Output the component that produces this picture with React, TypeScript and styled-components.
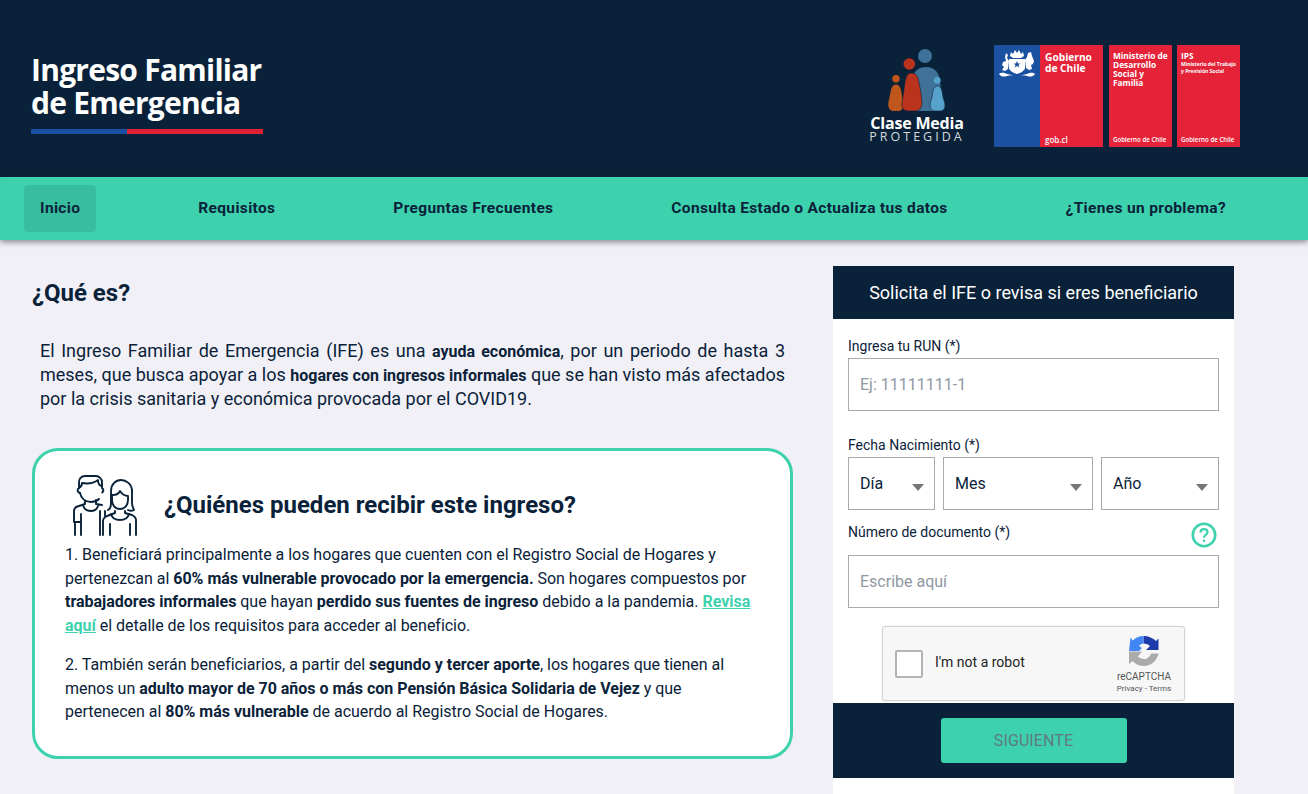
import React from 'react';
import styled, { createGlobalStyle } from 'styled-components';

const GlobalStyle = createGlobalStyle`
  html, body {
    margin: 0;
    height: 794px;
    overflow: hidden;
    background: #f2f0f7;
    font-family: Roboto, "Liberation Sans", sans-serif;
    color: #0a2239;
  }
  * { box-sizing: border-box; }
`;

const Header = styled.header`
  height: 177px;
  background: #0a2239;
  display: flex;
  align-items: flex-start;
  justify-content: space-between;
  padding: 45px 68px 0 31px;
`;

const Brand = styled.div`
  width: 232px;
  margin-top: 8px;
  color: #fff;
  font-family: "Open Sans", sans-serif;
  font-weight: 700;
  font-size: 30px;
  line-height: 33px;
  letter-spacing: -0.75px;
  white-space: nowrap;
`;

const BrandBar = styled.div`
  height: 5px;
  margin-top: 10px;
  background: linear-gradient(to right, #1a51a0 41.4%, #df2035 41.4%);
`;

const Logos = styled.div`
  display: flex;
  align-items: flex-start;
`;

const Clase = styled.div`
  width: 94px;
  margin-right: 30px;
  margin-top: 3px;
  color: #fff;
  display: flex;
  flex-direction: column;
  align-items: center;
  font-family: "Open Sans", sans-serif;
`;

const ClaseName = styled.div`
  margin-top: 1px;
  font-size: 16px;
  font-weight: 700;
  line-height: 16px;
  white-space: nowrap;
  letter-spacing: -0.2px;
`;

const ClaseSub = styled.div`
  font-size: 12.5px;
  line-height: 12px;
  letter-spacing: 3px;
  white-space: nowrap;
  color: #d5d9de;
`;

const Tile = styled.div<{ $w: number; $gap: number }>`
  width: ${(p) => p.$w}px;
  height: 102px;
  margin-right: ${(p) => p.$gap}px;
  background: #e42339;
  color: #fff;
  display: flex;
  font-family: "Open Sans", sans-serif;
`;

const TileBlue = styled.div`
  width: 46px;
  margin-right: 1px;
  background: #1a51a0;
  padding: 5px 5px 0;
`;

const TileBody = styled.div<{ $top: number }>`
  flex: 1;
  padding: ${(p) => p.$top}px 4px 3px;
  display: flex;
  flex-direction: column;
  justify-content: space-between;
`;

const TileTitle = styled.div<{ $size: number; $line: number }>`
  font-size: ${(p) => p.$size}px;
  line-height: ${(p) => p.$line}px;
  font-weight: 700;
  white-space: nowrap;
`;

const TileSmall = styled.div`
  font-size: 5px;
  line-height: 7px;
  font-weight: 700;
  margin-top: 1px;
  white-space: nowrap;
`;

const TileFoot = styled.div<{ $size: number }>`
  font-size: ${(p) => p.$size}px;
  line-height: 9px;
  font-weight: 600;
  white-space: nowrap;
`;

const Nav = styled.nav`
  height: 63px;
  background: #3ed1ae;
  display: flex;
  align-items: flex-start;
  justify-content: space-between;
  padding: 8px 66px 0 24px;
  box-shadow: 0 2px 6px rgba(40, 40, 60, 0.55);
  position: relative;
`;

const NavItem = styled.a<{ $active?: boolean }>`
  height: 47px;
  padding: 0 16px 2px;
  display: flex;
  align-items: center;
  border-radius: 4px;
  font-size: 15.5px;
  font-weight: 700;
  letter-spacing: 0.35px;
  white-space: nowrap;
  color: #0a2239;
  background: ${(p) => (p.$active ? '#38bd9f' : 'transparent')};
`;

const Main = styled.main`
  display: grid;
  grid-template-columns: 761px 401px;
  column-gap: 40px;
  padding: 26px 0 0 32px;
`;

const Title = styled.h1`
  margin: 0;
  font-size: 24px;
  line-height: 54px;
  font-weight: 700;
`;

const Intro = styled.p`
  margin: 19px 8px 0;
  font-size: 18px;
  line-height: 24px;
  text-align: justify;
  b { font-size: 16px; line-height: 1; font-weight: 700; }
`;

const Card = styled.section`
  margin-top: 37px;
  height: 311px;
  background: #fff;
  border: 3px solid #3ed1ae;
  border-radius: 26px;
  padding: 23px 30px 0;
`;

const CardHead = styled.div`
  display: flex;
  align-items: center;
  gap: 26px;
  padding-left: 7px;
  height: 62px;
  margin-bottom: 7px;
`;

const CardTitle = styled.h2`
  margin: 0;
  font-size: 24px;
  font-weight: 700;
`;

const CardText = styled.p`
  margin: 0 0 16px;
  font-size: 16px;
  line-height: 23.5px;
  letter-spacing: -0.02px;
  b { font-weight: 700; }
  a { color: #3ed1ae; font-weight: 700; text-decoration: underline; }
`;

const Panel = styled.aside`
  background: #fff;
  height: 528px;
`;

const PanelHead = styled.div`
  height: 53px;
  background: #0a2239;
  color: #fff;
  font-size: 18px;
  display: flex;
  align-items: center;
  justify-content: center;
`;

const Form = styled.form`
  height: 384px;
  padding: 0 15px;
`;

const Label = styled.label`
  display: block;
  font-size: 14px;
  line-height: 20px;
`;

const LabelRow = styled.div<{ $top: number; $height: number }>`
  display: flex;
  justify-content: space-between;
  align-items: flex-start;
  height: ${(p) => p.$height}px;
  padding-top: ${(p) => p.$top}px;
`;

const TextInput = styled.input`
  display: block;
  width: 100%;
  height: 53px;
  border: 1px solid #a9a9a9;
  background: #fff;
  padding: 0 11px;
  font: 16px Roboto, sans-serif;
  outline: none;
  &::placeholder { color: #8f98a3; }
`;

const DateRow = styled.div`
  display: grid;
  grid-template-columns: 87px 150px 118px;
  column-gap: 8px;
`;

const Select = styled.div`
  height: 53px;
  border: 1px solid #a9a9a9;
  padding: 0 11px;
  font-size: 16px;
  display: flex;
  align-items: center;
  justify-content: space-between;
`;

const Caret = styled.span`
  width: 0;
  height: 0;
  margin: 7px -1px 0 0;
  border-left: 6.5px solid transparent;
  border-right: 6.5px solid transparent;
  border-top: 7px solid #777;
`;

const HelpWrap = styled.span`
  display: flex;
  margin: 0 2px 0 0;
`;

const Captcha = styled.div`
  width: 303px;
  height: 75px;
  margin: 18px auto 0;
  background: #f7f7f7;
  border: 1px solid #d3d3d3;
  border-radius: 3px;
  box-shadow: 0 0 2px rgba(0, 0, 0, 0.1);
  display: flex;
  align-items: center;
  padding: 0 12px;
`;

const CaptchaBox = styled.span`
  width: 28px;
  height: 28px;
  background: #fff;
  border: 2px solid #b5b5b5;
  border-radius: 2px;
  margin-right: 12px;
`;

const CaptchaLabel = styled.span`
  flex: 1;
  font-size: 14px;
  color: #222;
  padding-bottom: 3px;
`;

const CaptchaBrand = styled.div`
  width: 56px;
  padding-top: 2px;
  display: flex;
  flex-direction: column;
  align-items: center;
  color: #555;
`;

const CaptchaName = styled.div`
  font-size: 10px;
  line-height: 12px;
  margin-top: 4px;
`;

const CaptchaLinks = styled.div`
  font-size: 8px;
  line-height: 11px;
  white-space: nowrap;
`;

const PanelFoot = styled.div`
  height: 75px;
  background: #0a2239;
  display: flex;
  align-items: center;
  justify-content: center;
`;

const NextButton = styled.button`
  width: 186px;
  height: 45px;
  border: 0;
  border-radius: 3px;
  background: #3ed1ae;
  color: #5f7a7e;
  font: 16px Roboto, sans-serif;
  letter-spacing: 0.1px;
`;

const Family = () => (
  <svg width="64" height="66" viewBox="0 0 64 66" style={{ display: 'block' }}>
    <circle cx="40" cy="8" r="7" fill="#3f7199" />
    <path d="M28 28c2-6 7-9 13-9s11 3 13 9c2 8 2 20 3 35H30z" fill="#3f7199" />
    <circle cx="52.300" cy="32.300" r="3.400" fill="#57a2cc" />
    <path d="M52.500 38c3 0 4.500 3 5 8 .5 5 2.500 8 2.500 11 0 4-2 6-5 6h-5c-3 0-5-2-5-6 0-3 2-6 2.500-11 .5-5 2-8 5-8z" fill="#57a2cc" stroke="#0a2239" strokeWidth="0.600" />
    <circle cx="11" cy="30.700" r="3.700" fill="#bf561c" />
    <path d="M11 36.500c3 0 5 3 5.500 8 .5 5 2 8 2 12 0 4-2 6.500-5 6.500H8.500c-3 0-5.200-2.500-5.200-6.500 0-4 1.500-7 2.200-12 .5-5 2.500-8 5.500-8z" fill="#bf561c" />
    <circle cx="24.300" cy="16" r="5.800" fill="#b9331d" />
    <path d="M26 25c5 0 7 3 8 9 1 7 3 14 3 21 0 5-3 8-7 8h-7c-4 0-7-3-6-8 1-6 2-14 3-21 1-6 3-9 6-9z" fill="#b9331d" stroke="#0a2239" strokeWidth="0.600" />
  </svg>
);

const CoatOfArms = () => (
  <svg width="36" height="28" viewBox="0 0 36 28" fill="#fff" style={{ display: 'block' }}>
    <path d="M11 6l1-4 2 2 2-4 2 3 2-3 2 4 2-2 1 4-3 2h-8z" />
    <path d="M10 9h16v9c0 2-4 5-8 6-4-1-8-4-8-6z" />
    <path d="M18 11l1 2.500h2.500l-2 1.500.8 2.500-2.300-1.500-2.300 1.500.8-2.500-2-1.500H17z" fill="#1a51a0" />
    <path d="M7 3l2 2-1 3 2 3-1 8-3 2-3-1 2-3-2-2 1-3 3-1-1-4z" />
    <path d="M29 3l3-1 1 4 2 5-1 3-2 1 1 4-3 1-3-2-1-8 2-3z" />
    <path d="M0 24c3-2 5-1 8 0s6 1 10 1 7 0 10-1 5-2 8 0c-2 3-5 3-8 2s-6-1-10-1-7 0-10 1-6 1-8-2z" />
  </svg>
);

const Kids = () => (
  <svg width="66" height="62" viewBox="0 0 66 62" fill="none" stroke="#0a2239" strokeWidth="1.900" strokeLinecap="round" strokeLinejoin="round">
    <path d="M8 19c-2-.5-3-2-2-4l1-1V8c0-3 2-6 6-6h11c3 0 6 3 6 6v6l1 1c.7 1.500.2 2.700-.8 3.500" />
    <path d="M8 19c1 5 5 9 11 9 3 0 6-1 8-3" />
    <path d="M7 14c2-1 3-3 3-5 6 1 12 0 16-3 0 3 1 5 3 6" />
    <path d="M13 27v3l-9 3c-1 1-2 2-2 4v11h7V61M3 48v13" />
    <path d="M11 31c1 4 4 6 8 6 3 0 6-2 7-5M24 26v4l6 1" />
    <path d="M9 40v8" />
    <path d="M36 36c2-1 3-3 3-7V17c0-7 5-11 10-11s11 4 11 11v12c0 3 1 5 2 7-2 1-4 1-6 0" />
    <path d="M41 21c3 0 6-2 7-4 2 3 5 5 8 5v4c0 5-3 9-8 9s-8-4-8-9v-5z" />
    <path d="M43 37v2l-8 3c-2 1-4 3-4 5v14M53 37v2l7 2c2 1 4 3 4 5v15" />
    <path d="M39 40c1 4 4 6 9 6s8-2 9-6" />
    <path d="M38 50v11M58 50v11" />
    <path d="M28 37v24M33 37v5" />
  </svg>
);

const HelpIcon = () => (
  <svg width="26" height="26" viewBox="0 0 26 26" fill="none" stroke="#3ed1ae" strokeWidth="2.600">
    <circle cx="13" cy="13" r="11.200" />
    <path d="M9.500 10.500c0-2 1.500-3.300 3.500-3.300s3.500 1.300 3.500 3.100c0 2.700-3.500 2.600-3.500 5.400" strokeWidth="2.200" />
    <circle cx="13" cy="18.800" r="1.300" fill="#3ed1ae" stroke="none" />
  </svg>
);

const RecaptchaLogo = () => (
  <svg width="32" height="32" viewBox="0 0 32 32" style={{ display: 'block' }}>
    <path d="M15.500 1c5 0 9.500 2 12.500 5l2.500-2.500V15H18l4-4c-1.500-1.500-3.800-2.500-6.500-2.500z" fill="#1c3aa9" />
    <path d="M15.500 1C11 1 7.500 2.500 5 5.500L2.500 2.500 1 16h10l3-3-3-2c1-1.500 2.500-2.500 4.500-2.500z" fill="#4285f4" />
    <path d="M1 16.500V29l3.500-3C7 29 11.500 31 16 31c7 0 13-5 14.500-12.500H23c-1 3.500-4 5.500-7 5.500-2.500 0-4.500-1-6-2.500l4-5z" fill="#ababab" />
  </svg>
);

export default function App() {
  return (
    <>
      <GlobalStyle />
      <Header>
        <Brand>
          Ingreso Familiar
          <br />
          de Emergencia
          <BrandBar />
        </Brand>
        <Logos>
          <Clase>
            <Family />
            <ClaseName>Clase Media</ClaseName>
            <ClaseSub>PROTEGIDA</ClaseSub>
          </Clase>
          <Tile $w={109} $gap={6}>
            <TileBlue>
              <CoatOfArms />
            </TileBlue>
            <TileBody $top={7}>
              <TileTitle $size={10.200} $line={10.500}>
                Gobierno
                <br />
                de Chile
              </TileTitle>
              <TileFoot $size={8}>gob.cl</TileFoot>
            </TileBody>
          </Tile>
          <Tile $w={63} $gap={5}>
            <TileBody $top={6}>
              <TileTitle $size={8.300} $line={9}>
                Ministerio de
                <br />
                Desarrollo
                <br />
                Social y
                <br />
                Familia
              </TileTitle>
              <TileFoot $size={6.200}>Gobierno de Chile</TileFoot>
            </TileBody>
          </Tile>
          <Tile $w={63} $gap={0}>
            <TileBody $top={6}>
              <div>
                <TileTitle $size={8.300} $line={9}>
                  IPS
                </TileTitle>
                <TileSmall>
                  Ministerio del Trabajo
                  <br />y Previsión Social
                </TileSmall>
              </div>
              <TileFoot $size={6.200}>Gobierno de Chile</TileFoot>
            </TileBody>
          </Tile>
        </Logos>
      </Header>
      <Nav>
        <NavItem $active>Inicio</NavItem>
        <NavItem>Requisitos</NavItem>
        <NavItem>Preguntas Frecuentes</NavItem>
        <NavItem>Consulta Estado o Actualiza tus datos</NavItem>
        <NavItem>¿Tienes un problema?</NavItem>
      </Nav>
      <Main>
        <div>
          <Title>¿Qué es?</Title>
          <Intro>
            El Ingreso Familiar de Emergencia (IFE) es una <b>ayuda económica</b>, por un periodo de hasta 3 meses, que
            busca apoyar a los <b>hogares con ingresos informales</b> que se han visto más afectados por la crisis
            sanitaria y económica provocada por el COVID19.
          </Intro>
          <Card>
            <CardHead>
              <Kids />
              <CardTitle>¿Quiénes pueden recibir este ingreso?</CardTitle>
            </CardHead>
            <CardText>
              1. Beneficiará principalmente a los hogares que cuenten con el Registro Social de Hogares y pertenezcan al{' '}
              <b>60% más vulnerable provocado por la emergencia.</b> Son hogares compuestos por{' '}
              <b>trabajadores informales</b> que hayan <b>perdido sus fuentes de ingreso</b> debido a la pandemia.{' '}
              <a>Revisa aquí</a> el detalle de los requisitos para acceder al beneficio.
            </CardText>
            <CardText>
              2. También serán beneficiarios, a partir del <b>segundo y tercer aporte</b>, los hogares que tienen al
              menos un <b>adulto mayor de 70 años o más con Pensión Básica Solidaria de Vejez</b> y que pertenecen al{' '}
              <b>80% más vulnerable</b> de acuerdo al Registro Social de Hogares.
            </CardText>
          </Card>
        </div>
        <Panel>
          <PanelHead>Solicita el IFE o revisa si eres beneficiario</PanelHead>
          <Form>
            <LabelRow $top={17} $height={39}>
              <Label>Ingresa tu RUN (*)</Label>
            </LabelRow>
            <TextInput placeholder="Ej: 11111111-1" />
            <LabelRow $top={24} $height={46}>
              <Label>Fecha Nacimiento (*)</Label>
            </LabelRow>
            <DateRow>
              <Select>
                Día
                <Caret />
              </Select>
              <Select>
                Mes
                <Caret />
              </Select>
              <Select>
                Año
                <Caret />
              </Select>
            </DateRow>
            <LabelRow $top={12} $height={45}>
              <Label>Número de documento (*)</Label>
              <HelpWrap>
                <HelpIcon />
              </HelpWrap>
            </LabelRow>
            <TextInput placeholder="Escribe aquí" />
            <Captcha>
              <CaptchaBox />
              <CaptchaLabel>I'm not a robot</CaptchaLabel>
              <CaptchaBrand>
                <RecaptchaLogo />
                <CaptchaName>reCAPTCHA</CaptchaName>
                <CaptchaLinks>Privacy - Terms</CaptchaLinks>
              </CaptchaBrand>
            </Captcha>
          </Form>
          <PanelFoot>
            <NextButton type="button">SIGUIENTE</NextButton>
          </PanelFoot>
        </Panel>
      </Main>
    </>
  );
}
